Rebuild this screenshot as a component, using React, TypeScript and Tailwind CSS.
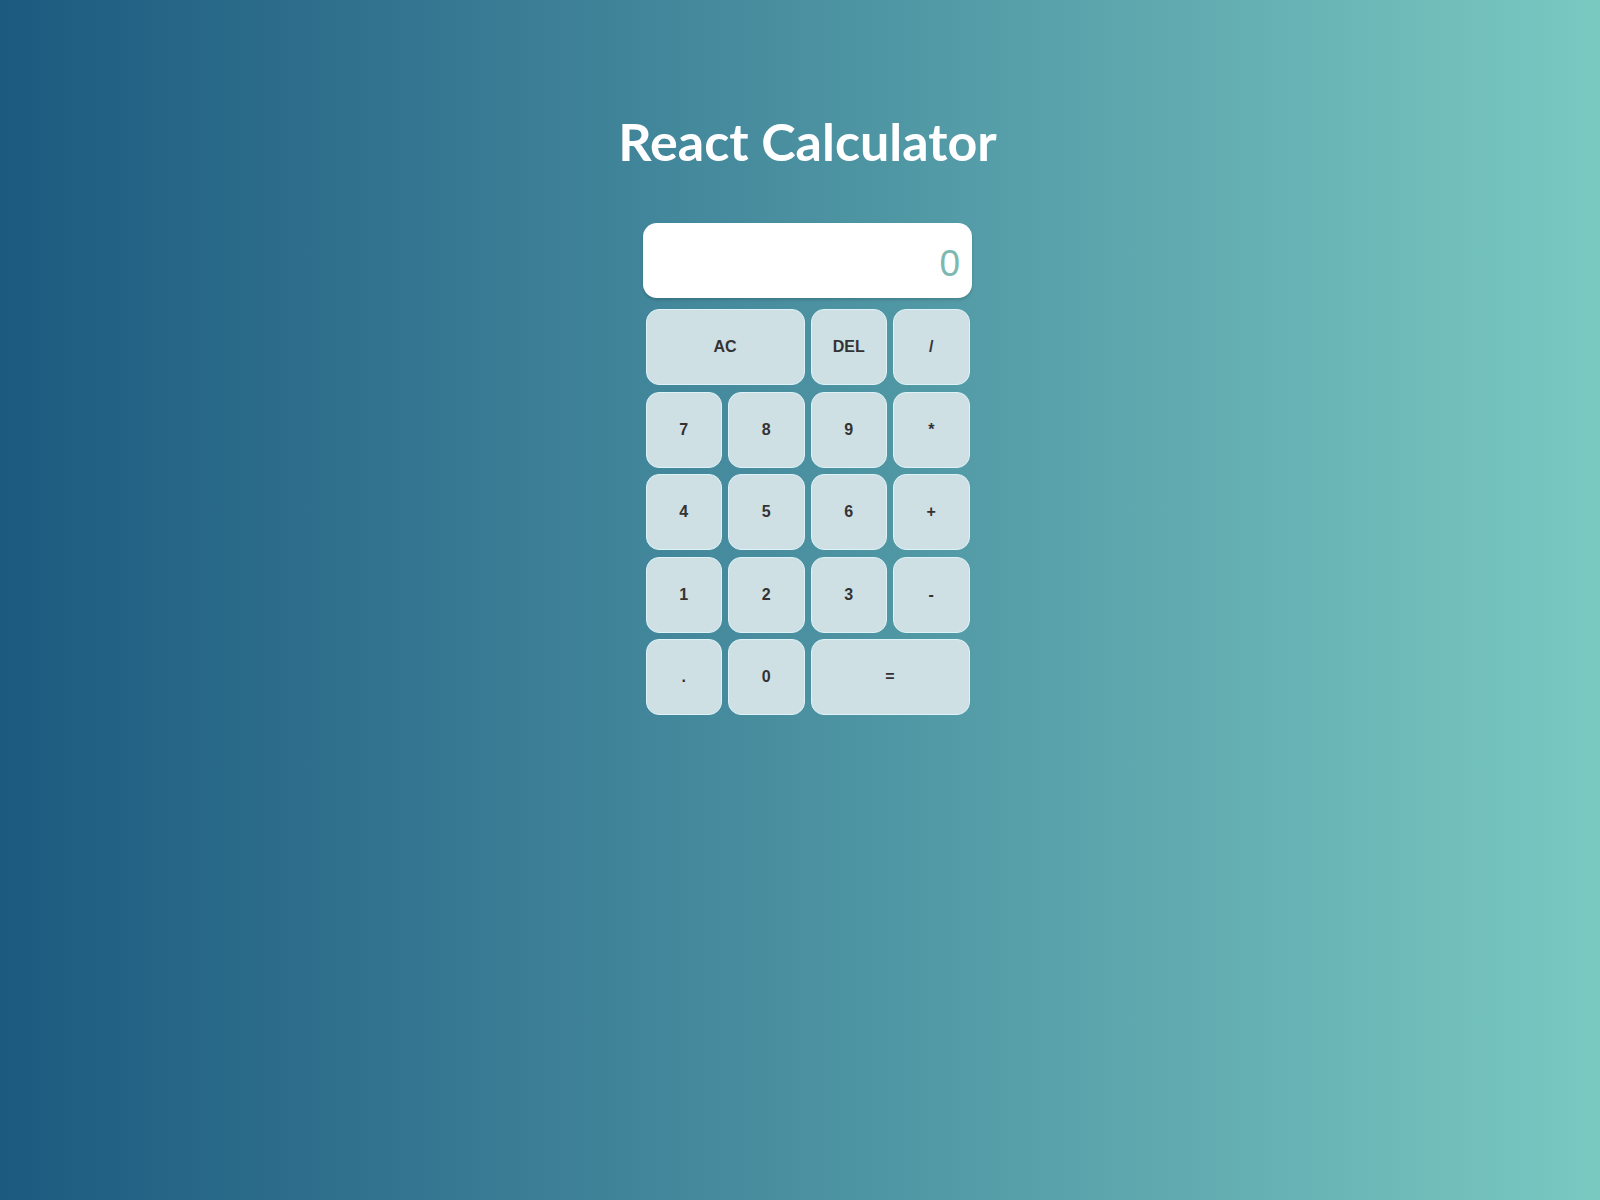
import React, { useState } from "react";

type Key = { label: string; wide?: boolean };

const keys: Key[] = [
  { label: "AC", wide: true },
  { label: "DEL" },
  { label: "/" },
  { label: "7" },
  { label: "8" },
  { label: "9" },
  { label: "*" },
  { label: "4" },
  { label: "5" },
  { label: "6" },
  { label: "+" },
  { label: "1" },
  { label: "2" },
  { label: "3" },
  { label: "-" },
  { label: "." },
  { label: "0" },
  { label: "=", wide: true },
];

const App = () => {
  const [value, setValue] = useState("0");

  const handleKey = (label: string) => {
    if (label === "AC") return setValue("0");
    if (label === "DEL") return setValue(value.length > 1 ? value.slice(0, -1) : "0");
    if (label === "=") {
      try {
        // eslint-disable-next-line no-new-func
        const result = Function(`return (${value})`)();
        setValue(String(result));
      } catch {
        setValue("0");
      }
      return;
    }
    setValue(value === "0" && label !== "." ? label : value + label);
  };

  return (
    <div className="min-h-[1200px] w-full bg-gradient-to-r from-[#1c5a7f] to-[#7ac9c1] font-['Lato','Open_Sans',sans-serif]">
      <div className="flex flex-col items-center pl-[15px] pt-[105px]">
        <h1 className="text-[52px] font-bold leading-[72px] text-white">
          React Calculator
        </h1>
        <div className="mt-[46px] flex w-[329px] flex-col items-center">
          <div className="flex h-[75px] w-full items-center justify-end rounded-[14px] bg-white px-[12px] pt-[6px] font-['Liberation_Sans',Arial,sans-serif] text-[37px] text-[#7db8b1] shadow-[0_2px_3px_rgba(0,0,0,0.15)]">
            {value}
          </div>
          <div className="mt-[11px] grid grid-cols-[repeat(4,76.5px)] auto-rows-[76px] gap-x-[6px] gap-y-[6.5px]">
            {keys.map((key) => (
              <button
                key={key.label}
                onClick={() => handleKey(key.label)}
                className={`flex items-center justify-center rounded-[13px] border border-[#ddf3f7] bg-[#cfe0e5] font-['Liberation_Sans',Arial,sans-serif] text-[16px] font-bold text-[#333] ${
                  key.wide ? "col-span-2" : ""
                }`}
              >
                {key.label}
              </button>
            ))}
          </div>
        </div>
      </div>
    </div>
  );
};

export default App;
